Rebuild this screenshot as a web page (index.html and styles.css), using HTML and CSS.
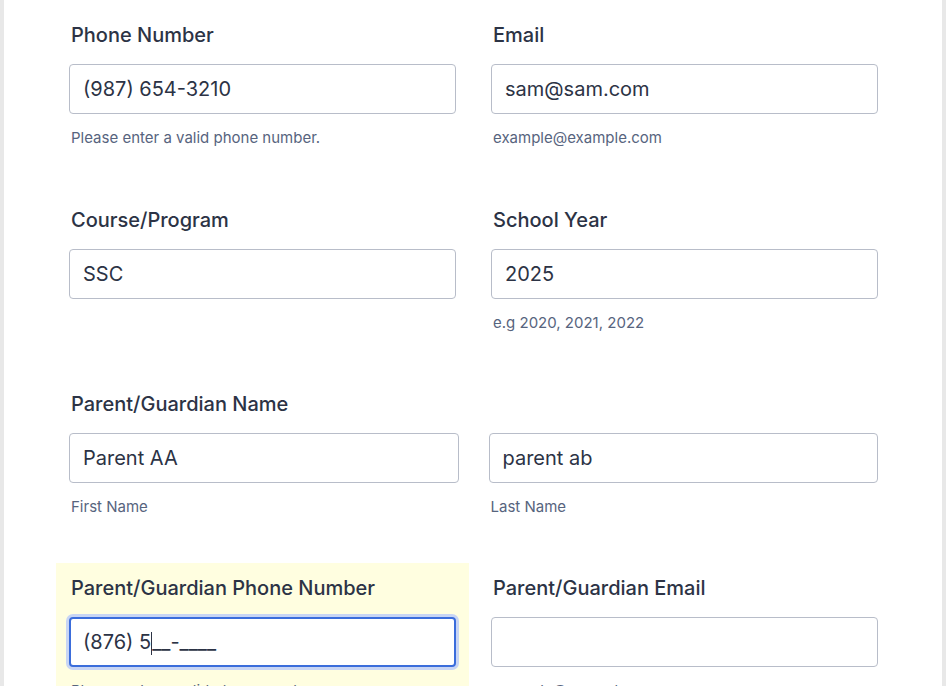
FILE: index.html
```html
<!DOCTYPE html>
<html lang="en">
<head>
    <meta charset="UTF-8">
    <meta name="viewport" content="width=device-width, initial-scale=1.0">
    <title>Student Registration</title>
    <link rel="stylesheet" href="styles.css">
</head>
<body>
    <div class="card">
        <form class="form">
            <div class="form-row">
                <div class="field">
                    <label class="field-label">Phone Number</label>
                    <input class="field-input" type="text" value="(987) 654-3210">
                    <span class="sublabel">Please enter a valid phone number.</span>
                </div>
                <div class="field">
                    <label class="field-label">Email</label>
                    <input class="field-input" type="text" value="sam@sam.com">
                    <span class="sublabel">example@example.com</span>
                </div>
            </div>

            <div class="form-row">
                <div class="field">
                    <label class="field-label">Course/Program</label>
                    <input class="field-input" type="text" value="SSC">
                </div>
                <div class="field">
                    <label class="field-label">School Year</label>
                    <input class="field-input" type="text" value="2025">
                    <span class="sublabel">e.g 2020, 2021, 2022</span>
                </div>
            </div>

            <div class="form-row">
                <div class="field field-wide">
                    <label class="field-label">Parent/Guardian Name</label>
                    <div class="name-group">
                        <div class="name-part">
                            <input class="field-input" type="text" value="Parent AA">
                            <span class="sublabel">First Name</span>
                        </div>
                        <div class="name-part">
                            <input class="field-input" type="text" value="parent ab">
                            <span class="sublabel">Last Name</span>
                        </div>
                    </div>
                </div>
            </div>

            <div class="form-row">
                <div class="field active">
                    <label class="field-label">Parent/Guardian Phone Number</label>
                    <div class="field-input focused">(876) 5<span class="caret"></span>__-____</div>
                    <span class="sublabel">Please enter a valid phone number.</span>
                </div>
                <div class="field">
                    <label class="field-label">Parent/Guardian Email</label>
                    <input class="field-input" type="text" value="">
                    <span class="sublabel">example@example.com</span>
                </div>
            </div>
        </form>
    </div>
</body>
</html>
```

FILE: styles.css
```css
* {
    box-sizing: border-box;
    margin: 0;
    padding: 0;
}

body {
    font-family: Inter, 'Noto Sans', sans-serif;
    background: #e8e8e8;
    color: #2c3345;
    height: 686px;
    overflow: hidden;
}

.card {
    background: #fff;
    margin: 0 4px;
    height: 100%;
    padding-top: 10px;
}

.form {
    width: 836px;
    margin: 0 auto;
    position: relative;
    left: 1px;
}

.form-row {
    display: grid;
    grid-template-columns: 413px 413px;
    gap: 9px;
    margin-top: 1px;
}

.form-row:first-child {
    margin-top: 0;
}

.form-row:nth-child(2) {
    margin-top: 2px;
}

.field {
    display: flex;
    flex-direction: column;
    padding: 11px 13px 46px;
    min-height: 183px;
}

.field-wide {
    grid-column: 1 / -1;
}

.field.active {
    background: #fffee0;
}

.field-label {
    font-size: 20px;
    font-weight: 480;
    line-height: 28px;
    margin-bottom: 15px;
    padding-left: 2px;
}

.field-input {
    display: block;
    width: 100%;
    height: 50px;
    border: 1px solid #b8bdc9;
    border-radius: 4px;
    padding: 0 13px;
    font-family: inherit;
    font-size: 20px;
    color: #2c3345;
    background: #fff;
    outline: none;
}

.field-input.focused {
    display: flex;
    align-items: center;
    border: 2px solid #3b6ddb;
    box-shadow: 0 0 0 3px #c8d5f4;
    padding: 0 12px;
}

.caret {
    display: inline-block;
    width: 1px;
    height: 23px;
    background: #2c3345;
    margin-top: 2px;
}

.sublabel {
    display: block;
    margin-top: 15px;
    font-size: 15px;
    line-height: 18px;
    color: #57647e;
    padding-left: 2px;
}

.name-group {
    display: grid;
    grid-template-columns: 1fr 1fr;
    gap: 30px;
}
```
